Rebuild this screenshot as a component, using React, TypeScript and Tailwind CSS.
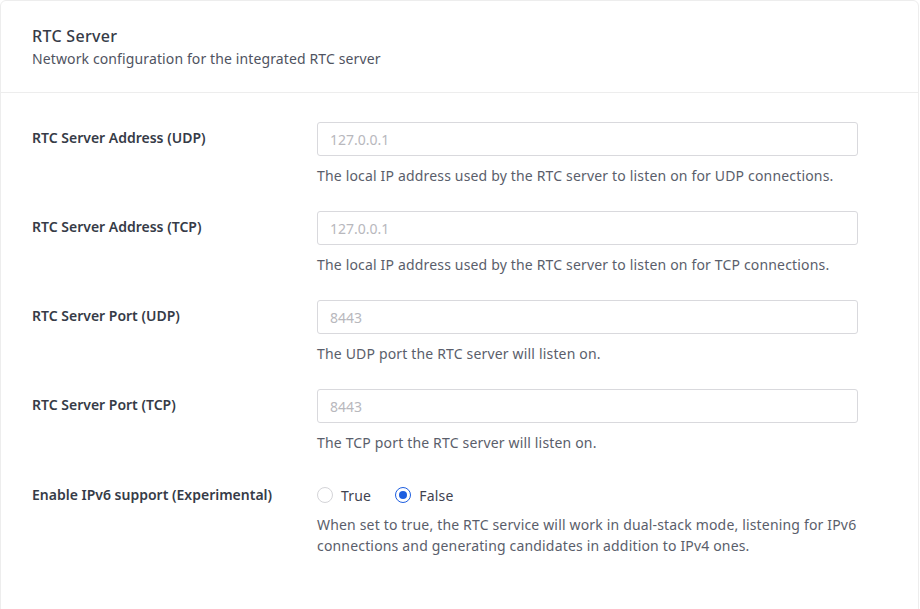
import { useState } from "react";

interface Field {
  label: string;
  placeholder: string;
  help: string;
}

const fields: Field[] = [
  {
    label: "RTC Server Address (UDP)",
    placeholder: "127.0.0.1",
    help: "The local IP address used by the RTC server to listen on for UDP connections.",
  },
  {
    label: "RTC Server Address (TCP)",
    placeholder: "127.0.0.1",
    help: "The local IP address used by the RTC server to listen on for TCP connections.",
  },
  {
    label: "RTC Server Port (UDP)",
    placeholder: "8443",
    help: "The UDP port the RTC server will listen on.",
  },
  {
    label: "RTC Server Port (TCP)",
    placeholder: "8443",
    help: "The TCP port the RTC server will listen on.",
  },
];

function Radio({ checked, label, onClick }: { checked: boolean; label: string; onClick: () => void }) {
  return (
    <label className="flex items-center gap-2 cursor-pointer" onClick={onClick}>
      <span
        className={
          checked
            ? "w-4 h-4 rounded-full border border-[#1d5ee0] flex items-center justify-center bg-white"
            : "w-4 h-4 rounded-full border border-[#d4d4d8] bg-white"
        }
      >
        {checked && <span className="w-2 h-2 rounded-full bg-[#1d5ee0]" />}
      </span>
      <span className="text-[14px] tracking-[0.2px] text-[#3f4350]">{label}</span>
    </label>
  );
}

export default function App() {
  const [ipv6, setIpv6] = useState(false);

  return (
    <div className="h-[609px] overflow-hidden bg-white font-['Noto_Sans',sans-serif]">
      <div className="w-[919px] h-[640px] border border-[#ededed] rounded-md bg-white">
        {/* Header */}
        <div className="px-[31px] pt-[23px] pb-[23px] border-b border-[#ededed]">
          <h2 className="text-[16px] leading-6 font-medium tracking-[0.3px] text-[#363b47]">RTC Server</h2>
          <p className="text-[14px] leading-[21px] tracking-[0.12px] text-[#4f5361]">
            Network configuration for the integrated RTC server
          </p>
        </div>

        {/* Fields */}
        <div className="px-[31px] pt-[29px]">
          {fields.map((f) => (
            <div key={f.label} className="flex mb-[25px]">
              <div className="w-[285px] h-[34px] pb-[3px] flex items-center text-[14px] font-semibold text-[#363b47]">
                {f.label}
              </div>
              <div className="w-[541px]">
                <input
                  className="w-full h-[34px] px-3 text-[14px] border border-[#d9d9dd] rounded-[3px] placeholder:text-[#b8b8bd] outline-none"
                  placeholder={f.placeholder}
                />
                <div className="mt-[9px] text-[14px] leading-[21px] tracking-[0.17px] text-[#5a5e6b]">{f.help}</div>
              </div>
            </div>
          ))}

          <div className="flex">
            <div className="w-[285px] h-[34px] pb-[2px] flex items-center text-[14px] font-semibold text-[#363b47]">
              Enable IPv6 support (Experimental)
            </div>
            <div className="w-[541px]">
              <div className="h-[34px] flex items-center gap-[24px]">
                <Radio checked={ipv6} label="True" onClick={() => setIpv6(true)} />
                <Radio checked={!ipv6} label="False" onClick={() => setIpv6(false)} />
              </div>
              <div className="mt-[2px] text-[14px] leading-[21px] tracking-[0.17px] text-[#5a5e6b]">
                When set to true, the RTC service will work in dual-stack mode, listening for IPv6 connections and
                generating candidates in addition to IPv4 ones.
              </div>
            </div>
          </div>
        </div>
      </div>
    </div>
  );
}
